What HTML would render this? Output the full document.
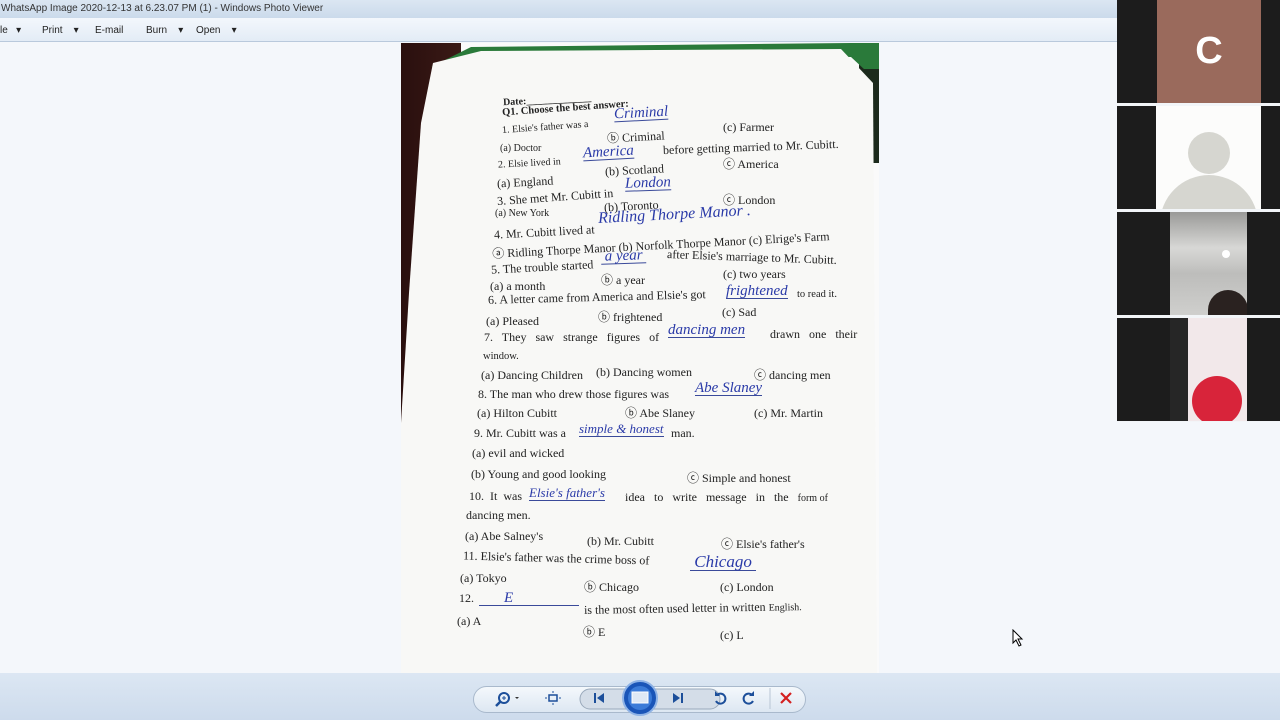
<!DOCTYPE html>
<html><head><meta charset="utf-8"><style>
*{margin:0;padding:0;box-sizing:border-box}
body{width:1280px;height:720px;overflow:hidden;background:#f4f7fb;font-family:"Liberation Sans",sans-serif;position:relative}
.title{position:absolute;left:0;top:0;width:1117px;height:18px;background:linear-gradient(#dbe6f2,#cbdaeb);font-size:10px;color:#333;padding:3px 0 0 1px}
.menu{position:absolute;left:0;top:18px;width:1117px;height:24px;background:linear-gradient(#f3f7fc,#e3ecf6);border-bottom:1px solid #b9c9dc;font-size:10px;color:#222}
.menu span{position:absolute;top:7px}
.photo{position:absolute;left:401px;top:43px;width:478px;height:630px;background:#fafafa;overflow:hidden}
.dark{position:absolute;left:0;top:0;width:60px;height:380px;background:linear-gradient(90deg,#2a0f0e,#3a1a16)}
.dark2{position:absolute;left:458px;top:0;width:20px;height:120px;background:#1c2a1c}
.paper{position:absolute;left:0;top:0;width:478px;height:630px;background:#f8f8f6;clip-path:polygon(32px 20px,80px 8px,440px 6px,472px 40px,476px 630px,0 630px,0 380px,8px 250px,20px 80px)}
.green{position:absolute;left:30px;top:0;width:448px;height:26px;background:#2a7a3a;clip-path:polygon(0 24px,40px 4px,420px 0,448px 0,448px 40px,420px 14px,60px 10px)}
.t{position:absolute;font-family:"Liberation Serif",serif;font-size:12px;color:#222;white-space:nowrap}
.h{position:absolute;font-family:"Liberation Serif",serif;font-style:italic;font-size:15px;color:#2a3aa8;white-space:nowrap;border-bottom:1px solid #3a4a9a;line-height:14px}
.bar{position:absolute;left:0;top:673px;width:1280px;height:47px;background:linear-gradient(#dce7f3,#cddbec)}
.pill{position:absolute;left:473px;top:686px;width:333px;height:27px;border:1px solid #a9b9cc;border-radius:14px;background:linear-gradient(#f4f8fc,#dde7f2)}
.side{position:absolute;left:1117px;top:0;width:163px;height:422px;background:#f2f5f8}
.tile{position:absolute;left:1117px;width:163px;height:103px;background:#1c1c1c}
</style></head><body>
<div class="title">WhatsApp Image 2020-12-13 at 6.23.07 PM (1) - Windows Photo Viewer</div>
<div class="menu">
<span style="left:0">le&nbsp;&nbsp;&nbsp;▾</span><span style="left:42px">Print&nbsp;&nbsp;&nbsp;&nbsp;▾</span><span style="left:95px">E-mail</span><span style="left:146px">Burn&nbsp;&nbsp;&nbsp;&nbsp;▾</span><span style="left:196px">Open&nbsp;&nbsp;&nbsp;&nbsp;▾</span>
</div>
<div class="photo">
<div class="dark"></div>
<div class="dark2"></div>
<div class="green"></div>
<div class="paper"></div>
</div>
<div style="position:absolute;left:0;top:0;width:1280px;height:720px">
<div class="t" style="left:503px;top:95px;font-size:10px;font-weight:bold;transform:rotate(-3deg)">Date:_____________</div>
<div class="t" style="left:502px;top:103px;font-weight:bold;font-size:10.5px;transform:rotate(-4deg)">Q1. Choose the best answer:</div>
<div class="t" style="left:502px;top:122px;font-size:10px;transform:rotate(-4deg)">1. Elsie's father was a</div>
<div class="h" style="left:614px;top:106px;transform:rotate(-3deg)">Criminal</div>
<div class="t" style="left:607px;top:128px;transform:rotate(-3deg)">ⓑ Criminal</div>
<div class="t" style="left:723px;top:120px">(c) Farmer</div>
<div class="t" style="left:500px;top:143px;font-size:10px">(a) Doctor</div>
<div class="t" style="left:498px;top:158px;font-size:10px;transform:rotate(-3deg)">2. Elsie lived in</div>
<div class="h" style="left:583px;top:145px;transform:rotate(-3deg)">America</div>
<div class="t" style="left:663px;top:140px;transform:rotate(-2deg)">before getting married to Mr. Cubitt.</div>
<div class="t" style="left:497px;top:175px;transform:rotate(-3deg)">(a) England</div>
<div class="t" style="left:605px;top:163px;transform:rotate(-3deg)">(b) Scotland</div>
<div class="t" style="left:723px;top:155px">ⓒ America</div>
<div class="t" style="left:497px;top:190px;transform:rotate(-4deg)">3. She met Mr. Cubitt in</div>
<div class="h" style="left:625px;top:176px;transform:rotate(-2deg)">London</div>
<div class="t" style="left:495px;top:208px;font-size:10px">(a) New York</div>
<div class="t" style="left:604px;top:199px;transform:rotate(-3deg)">(b) Toronto</div>
<div class="t" style="left:723px;top:191px">ⓒ London</div>
<div class="t" style="left:494px;top:225px;transform:rotate(-3deg)">4. Mr. Cubitt lived at</div>
<div class="h" style="left:598px;top:208px;font-size:16px;border:none;transform:rotate(-3deg)">Ridling Thorpe Manor .</div>
<div class="t" style="left:492px;top:236px;transform:rotate(-3deg)">ⓐ Ridling Thorpe Manor (b) Norfolk Thorpe Manor (c) Elrige's Farm</div>
<div class="t" style="left:491px;top:260px;transform:rotate(-3deg)">5. The trouble started</div>
<div class="h" style="left:601px;top:249px;transform:rotate(-2deg)">&nbsp;a year&nbsp;</div>
<div class="t" style="left:667px;top:250px;transform:rotate(2deg)">after Elsie's marriage to Mr. Cubitt.</div>
<div class="t" style="left:490px;top:279px">(a) a month</div>
<div class="t" style="left:601px;top:271px">ⓑ a year</div>
<div class="t" style="left:723px;top:267px">(c) two years</div>
<div class="t" style="left:488px;top:290px;transform:rotate(-1.5deg)">6. A letter came from America and Elsie's got</div>
<div class="h" style="left:726px;top:284px">frightened</div>
<div class="t" style="left:797px;top:289px;font-size:10.5px">to read it.</div>
<div class="t" style="left:486px;top:314px">(a) Pleased</div>
<div class="t" style="left:598px;top:308px">ⓑ frightened</div>
<div class="t" style="left:722px;top:305px">(c) Sad</div>
<div class="t" style="left:484px;top:330px;word-spacing:6px">7. They saw strange figures of</div>
<div class="h" style="left:668px;top:323px">dancing men</div>
<div class="t" style="left:770px;top:327px;word-spacing:6px">drawn one their</div>
<div class="t" style="left:483px;top:351px;font-size:10.5px">window.</div>
<div class="t" style="left:481px;top:368px">(a) Dancing Children</div>
<div class="t" style="left:596px;top:365px">(b) Dancing women</div>
<div class="t" style="left:754px;top:366px">ⓒ dancing men</div>
<div class="t" style="left:478px;top:387px">8. The man who drew those figures was</div>
<div class="h" style="left:695px;top:381px">Abe Slaney</div>
<div class="t" style="left:477px;top:406px">(a) Hilton Cubitt</div>
<div class="t" style="left:625px;top:404px">ⓑ Abe Slaney</div>
<div class="t" style="left:754px;top:406px">(c) Mr. Martin</div>
<div class="t" style="left:474px;top:426px">9. Mr. Cubitt was a</div>
<div class="h" style="left:579px;top:422px;font-size:13px">simple &amp; honest</div>
<div class="t" style="left:671px;top:426px">man.</div>
<div class="t" style="left:472px;top:446px">(a) evil and wicked</div>
<div class="t" style="left:471px;top:467px">(b) Young and good looking</div>
<div class="t" style="left:687px;top:469px">ⓒ Simple and honest</div>
<div class="t" style="left:469px;top:489px;word-spacing:3px">10. It was</div>
<div class="h" style="left:529px;top:486px;font-size:13px">Elsie's father's</div>
<div class="t" style="left:625px;top:490px;word-spacing:6px">idea to write message in the <span style="font-size:10px;word-spacing:0">form of</span></div>
<div class="t" style="left:466px;top:508px">dancing men.</div>
<div class="t" style="left:465px;top:529px">(a) Abe Salney's</div>
<div class="t" style="left:587px;top:534px">(b) Mr. Cubitt</div>
<div class="t" style="left:721px;top:535px">ⓒ Elsie's father's</div>
<div class="t" style="left:463px;top:551px;transform:rotate(1.5deg)">11. Elsie's father was the crime boss of</div>
<div class="h" style="left:690px;top:553px;font-size:17px;line-height:17px">&nbsp;Chicago&nbsp;</div>
<div class="t" style="left:460px;top:571px">(a) Tokyo</div>
<div class="t" style="left:584px;top:578px">ⓑ Chicago</div>
<div class="t" style="left:720px;top:580px">(c) London</div>
<div class="t" style="left:459px;top:591px">12.</div>
<div class="h" style="left:479px;top:591px;width:100px;padding-left:25px">E</div>
<div class="t" style="left:584px;top:601px;transform:rotate(-1deg)">is the most often used letter in written <span style="font-size:10px">English.</span></div>
<div class="t" style="left:457px;top:614px">(a) A</div>
<div class="t" style="left:583px;top:623px">ⓑ E</div>
<div class="t" style="left:720px;top:628px">(c) L</div>
</div>
<div class="bar"></div>
<div class="pill"></div>
<svg style="position:absolute;left:473px;top:680px" width="340" height="40">
<circle cx="31" cy="18" r="5" fill="none" stroke="#1d4f9a" stroke-width="2"/><line x1="27" y1="22" x2="23" y2="26" stroke="#1d4f9a" stroke-width="2.5"/><path d="M29 18h4M31 16v4" stroke="#1d4f9a"/><path d="M42 17l2 2 2-2z" fill="#333"/>
<rect x="76" y="15" width="8" height="6" fill="none" stroke="#1d4f9a" stroke-width="1.5"/><path d="M72 18h2M86 18h2M80 11v2M80 23v2" stroke="#1d4f9a"/>
<rect x="107" y="9" width="140" height="20" rx="10" fill="#d4dde8" stroke="#9aa9bb"/>
<rect x="121" y="13" width="2" height="10" fill="#1d4f9a"/><path d="M131 13l-7 5 7 5z" fill="#1d4f9a"/>
<path d="M200 13l7 5-7 5z" fill="#1d4f9a"/><rect x="208" y="13" width="2" height="10" fill="#1d4f9a"/>
<circle cx="167" cy="18" r="17" fill="#1a55b8" stroke="#8fb3e6" stroke-width="2"/><circle cx="167" cy="18" r="12" fill="#3b7bd8"/><rect x="159" y="12" width="16" height="11" fill="#dfe9f5" stroke="#fff"/>
<path d="M244 15a5 5 0 1 1 -1 6" fill="none" stroke="#1d4f9a" stroke-width="2"/><path d="M242 11v5h5z" fill="#1d4f9a"/>
<path d="M279 15a5 5 0 1 0 1 6" fill="none" stroke="#1d4f9a" stroke-width="2"/><path d="M281 11v5h-5z" fill="#1d4f9a"/>
<line x1="297" y1="8" x2="297" y2="29" stroke="#b8c5d4"/>
<path d="M308 13l10 10M318 13l-10 10" stroke="#d42020" stroke-width="2.2"/>
</svg>
<div class="side"></div>
<div class="tile" style="top:0"><div style="position:absolute;left:40px;top:0;width:104px;height:103px;background:#9a6a5c;color:#fff;font-size:38px;font-weight:bold;text-align:center;line-height:103px">C</div></div>
<div class="tile" style="top:106px"><div style="position:absolute;left:39px;top:0;width:105px;height:103px;background:#fcfcfb;overflow:hidden"><div style="position:absolute;left:32px;top:26px;width:42px;height:42px;border-radius:50%;background:#d6d6d0"></div><div style="position:absolute;left:4px;top:69px;width:98px;height:60px;border-radius:50px 50px 0 0;background:#d6d6d0"></div></div></div>
<div class="tile" style="top:212px"><div style="position:absolute;left:53px;top:0;width:77px;height:103px;background:linear-gradient(#9a9a98,#d8d8d6 35%,#bdbdbb 60%,#cfcfcd);overflow:hidden"><div style="position:absolute;left:52px;top:38px;width:8px;height:8px;border-radius:50%;background:#fff"></div><div style="position:absolute;left:38px;top:78px;width:40px;height:30px;border-radius:20px 20px 0 0;background:#2a2220"></div></div></div>
<div class="tile" style="top:318px"><div style="position:absolute;left:53px;top:0;width:77px;height:103px;background:linear-gradient(90deg,#262626 0 18px,#f2e8ea 18px);overflow:hidden"><div style="position:absolute;left:22px;top:58px;width:50px;height:50px;border-radius:50%;background:#d8243a"></div></div></div>
<svg style="position:absolute;left:1012px;top:629px" width="12" height="18"><path d="M1 1v13l3-3 3 6 2-1-3-6h4z" fill="#fff" stroke="#000"/></svg>
</body></html>
